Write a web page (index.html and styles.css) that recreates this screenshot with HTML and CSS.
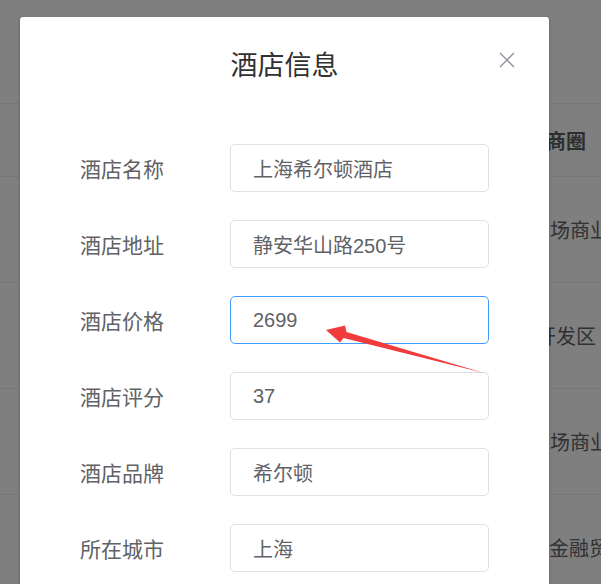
FILE: index.html
```html
<!DOCTYPE html>
<html lang="zh">
<head>
<meta charset="utf-8">
<title>酒店信息</title>
<link rel="stylesheet" href="styles.css">
</head>
<body>
<div class="page">
  <div class="table">
    <div class="tr th">
      <div class="cell-area">所在商圈</div>
    </div>
    <div class="tr">
      <div class="cell-area">人民广场商业区</div>
    </div>
    <div class="tr">
      <div class="cell-area shift-b">张江开发区</div>
    </div>
    <div class="tr">
      <div class="cell-area">人民广场商业区</div>
    </div>
    <div class="tr">
      <div class="cell-area shift-d">陆家嘴金融贸易区</div>
    </div>
  </div>
</div>

<div class="mask"></div>

<div class="dialog">
  <div class="dialog-header">
    <span class="dialog-title">酒店信息</span>
    <button class="dialog-close" aria-label="关闭">
      <svg width="16" height="16" viewBox="0 0 16 16"><path d="M1 1 L15 15 M15 1 L1 15" stroke="#909399" stroke-width="1.4" fill="none"/></svg>
    </button>
  </div>
  <div class="dialog-body">
    <div class="form-item">
      <label class="form-label">酒店名称</label>
      <div class="input">上海希尔顿酒店</div>
    </div>
    <div class="form-item">
      <label class="form-label">酒店地址</label>
      <div class="input">静安华山路250号</div>
    </div>
    <div class="form-item">
      <label class="form-label">酒店价格</label>
      <div class="input is-focus">2699</div>
    </div>
    <div class="form-item">
      <label class="form-label">酒店评分</label>
      <div class="input">37</div>
    </div>
    <div class="form-item">
      <label class="form-label">酒店品牌</label>
      <div class="input">希尔顿</div>
    </div>
    <div class="form-item">
      <label class="form-label">所在城市</label>
      <div class="input">上海</div>
    </div>
  </div>
</div>

<svg class="annot" width="601" height="584" viewBox="0 0 601 584">
  <polygon points="326,330 345,325.5 346.5,332 484,373 343.5,338 340,342.5" fill="#f03c3c"/>
</svg>
</body>
</html>
```

FILE: styles.css
```css
* { box-sizing: border-box; }
html, body {
  margin: 0;
  padding: 0;
}
body {
  width: 601px;
  height: 584px;
  overflow: hidden;
  position: relative;
  background: #fff;
  font-family: "Liberation Sans", "Noto Sans CJK SC", sans-serif;
  color: #606266;
}

.page {
  padding-top: 103px;
}
.table {
  border-top: 1px solid #ebeef5;
}
.tr {
  height: 106px;
  border-bottom: 1px solid #ebeef5;
  display: flex;
  align-items: center;
  white-space: nowrap;
  overflow: hidden;
  font-size: 20px;
  color: #606266;
}
.tr.th {
  height: 73px;
  font-weight: bold;
  color: #5a5c60;
}
.cell-area {
  padding-left: 490px;
}
.tr.th .cell-area {
  padding-left: 506px;
}
.tr .cell-area.shift-b {
  padding-left: 496px;
}
.tr .cell-area.shift-d {
  padding-left: 489px;
}

.mask {
  position: absolute;
  inset: 0;
  background: rgba(0, 0, 0, 0.5);
}

.dialog {
  position: absolute;
  left: 20px;
  top: 17px;
  width: 529px;
  height: 640px;
  background: #fff;
  border-radius: 3px;
  box-shadow: 0 1px 3px rgba(0, 0, 0, 0.3);
}
.dialog-header {
  position: relative;
  padding-top: 31px;
  text-align: center;
}
.dialog-title {
  display: block;
  font-size: 27px;
  line-height: 36px;
  color: #303133;
}
.dialog-close {
  position: absolute;
  top: 35px;
  right: 34px;
  width: 16px;
  height: 16px;
  padding: 0;
  border: 0;
  background: transparent;
  display: flex;
}

.dialog-body {
  padding: 60px 0 0 60px;
  display: flex;
  flex-direction: column;
  gap: 28px;
}
.form-item {
  display: flex;
  align-items: center;
  height: 48px;
}
.form-label {
  width: 150px;
  font-size: 21px;
  color: #606266;
}
.input {
  width: 259px;
  height: 48px;
  border: 1px solid #dcdfe6;
  border-radius: 5px;
  padding: 0 22px;
  display: flex;
  align-items: center;
  font-size: 20px;
  color: #606266;
}
.input.is-focus {
  border-color: #409eff;
}

.annot {
  position: absolute;
  left: 0;
  top: 0;
  pointer-events: none;
}
```
